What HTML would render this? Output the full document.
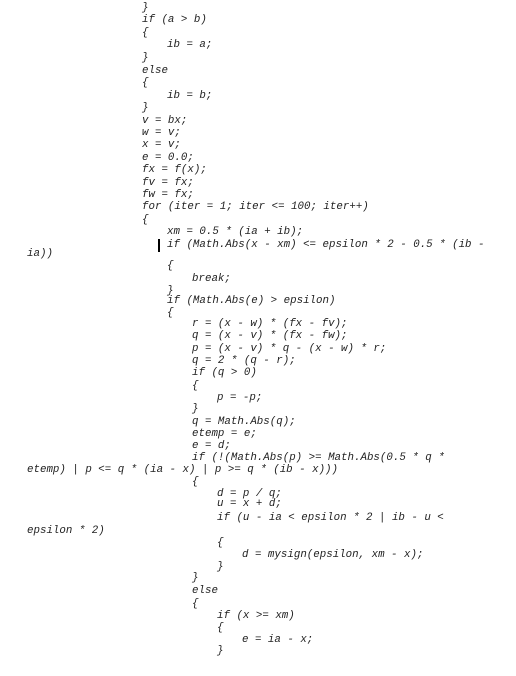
<!DOCTYPE html>
<html><head><style>
body{margin:0;width:516px;height:676px;background:#fff;position:relative;overflow:hidden}
div.l{position:absolute;font-family:"Liberation Mono",monospace;font-style:italic;font-size:10.8px;line-height:12px;color:#222;white-space:pre}
</style></head><body>
<div class="l" style="left:142px;top:2px">}</div>
<div class="l" style="left:142px;top:14px">if (a &gt; b)</div>
<div class="l" style="left:142px;top:27px">{</div>
<div class="l" style="left:167px;top:39px">ib = a;</div>
<div class="l" style="left:142px;top:52px">}</div>
<div class="l" style="left:142px;top:65px">else</div>
<div class="l" style="left:142px;top:77px">{</div>
<div class="l" style="left:167px;top:90px">ib = b;</div>
<div class="l" style="left:142px;top:102px">}</div>
<div class="l" style="left:142px;top:115px">v = bx;</div>
<div class="l" style="left:142px;top:127px">w = v;</div>
<div class="l" style="left:142px;top:139px">x = v;</div>
<div class="l" style="left:142px;top:152px">e = 0.0;</div>
<div class="l" style="left:142px;top:164px">fx = f(x);</div>
<div class="l" style="left:142px;top:177px">fv = fx;</div>
<div class="l" style="left:142px;top:189px">fw = fx;</div>
<div class="l" style="left:142px;top:201px">for (iter = 1; iter &lt;= 100; iter++)</div>
<div class="l" style="left:142px;top:214px">{</div>
<div class="l" style="left:167px;top:226px">xm = 0.5 * (ia + ib);</div>
<div style="position:absolute;left:158px;top:239px;width:2px;height:13px;background:#000"></div>
<div class="l" style="left:167px;top:239px">if (Math.Abs(x - xm) &lt;= epsilon * 2 - 0.5 * (ib -</div>
<div class="l" style="left:27px;top:248px">ia))</div>
<div class="l" style="left:167px;top:260px">{</div>
<div class="l" style="left:192px;top:273px">break;</div>
<div class="l" style="left:167px;top:285px">}</div>
<div class="l" style="left:167px;top:295px">if (Math.Abs(e) &gt; epsilon)</div>
<div class="l" style="left:167px;top:307px">{</div>
<div class="l" style="left:192px;top:318px">r = (x - w) * (fx - fv);</div>
<div class="l" style="left:192px;top:330px">q = (x - v) * (fx - fw);</div>
<div class="l" style="left:192px;top:343px">p = (x - v) * q - (x - w) * r;</div>
<div class="l" style="left:192px;top:355px">q = 2 * (q - r);</div>
<div class="l" style="left:192px;top:367px">if (q &gt; 0)</div>
<div class="l" style="left:192px;top:380px">{</div>
<div class="l" style="left:217px;top:392px">p = -p;</div>
<div class="l" style="left:192px;top:403px">}</div>
<div class="l" style="left:192px;top:416px">q = Math.Abs(q);</div>
<div class="l" style="left:192px;top:428px">etemp = e;</div>
<div class="l" style="left:192px;top:440px">e = d;</div>
<div class="l" style="left:192px;top:452px">if (!(Math.Abs(p) &gt;= Math.Abs(0.5 * q *</div>
<div class="l" style="left:27px;top:464px">etemp) | p &lt;= q * (ia - x) | p &gt;= q * (ib - x)))</div>
<div class="l" style="left:192px;top:476px">{</div>
<div class="l" style="left:217px;top:488px">d = p / q;</div>
<div class="l" style="left:217px;top:498px">u = x + d;</div>
<div class="l" style="left:217px;top:512px">if (u - ia &lt; epsilon * 2 | ib - u &lt;</div>
<div class="l" style="left:27px;top:525px">epsilon * 2)</div>
<div class="l" style="left:217px;top:537px">{</div>
<div class="l" style="left:242px;top:549px">d = mysign(epsilon, xm - x);</div>
<div class="l" style="left:217px;top:561px">}</div>
<div class="l" style="left:192px;top:572px">}</div>
<div class="l" style="left:192px;top:585px">else</div>
<div class="l" style="left:192px;top:598px">{</div>
<div class="l" style="left:217px;top:610px">if (x &gt;= xm)</div>
<div class="l" style="left:217px;top:622px">{</div>
<div class="l" style="left:242px;top:634px">e = ia - x;</div>
<div class="l" style="left:217px;top:645px">}</div>
</body></html>
